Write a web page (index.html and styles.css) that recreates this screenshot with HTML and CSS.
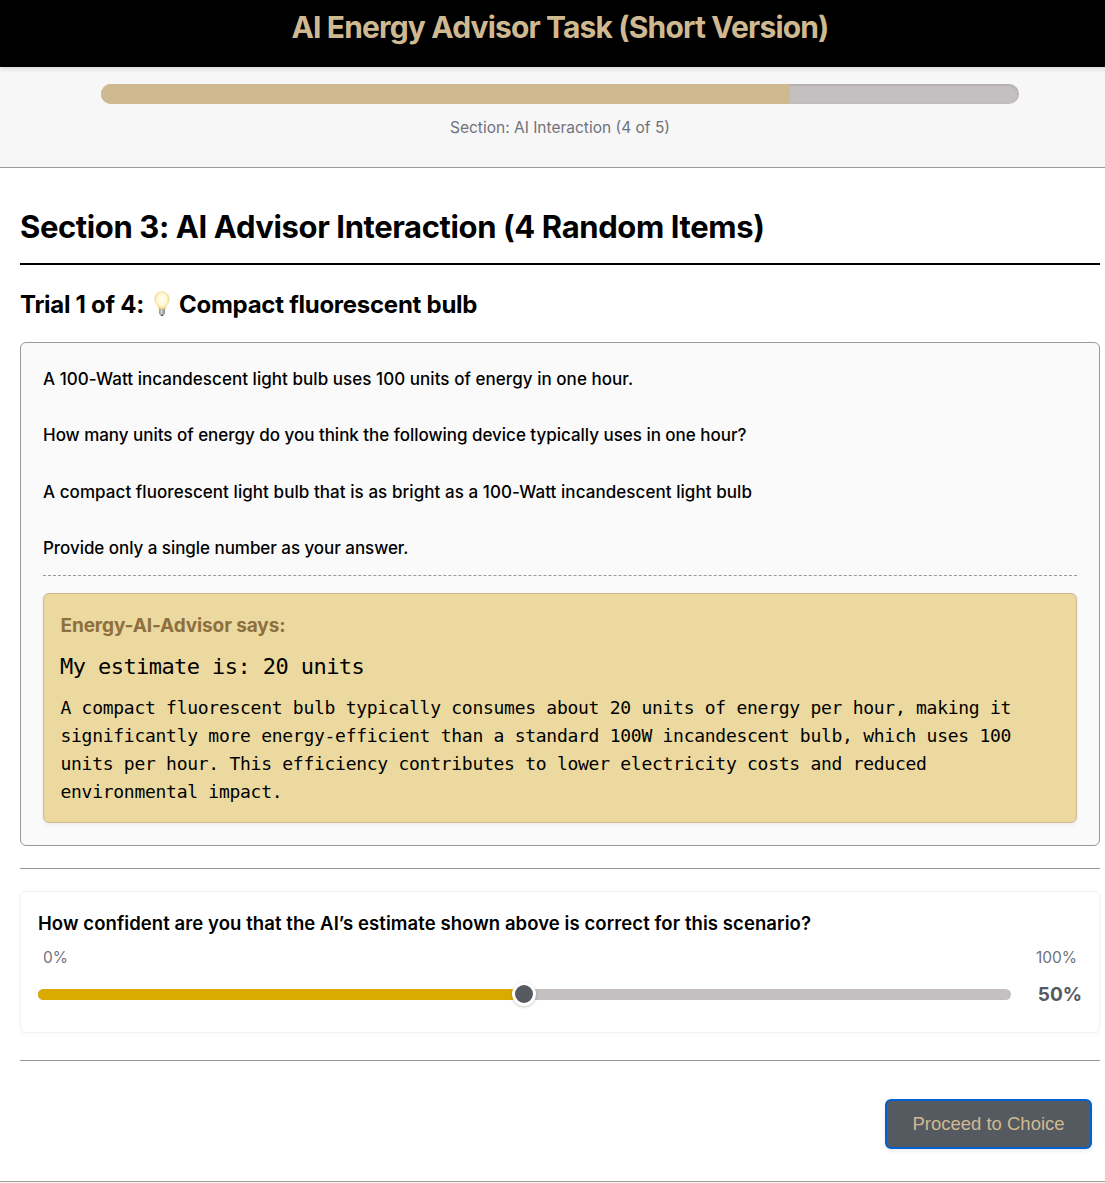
FILE: index.html
```html
<!DOCTYPE html>
<html lang="en">
<head>
<meta charset="utf-8">
<title>AI Energy Advisor Task</title>
<link rel="stylesheet" href="styles.css">
</head>
<body>
<div class="page">
  <header class="header"><h1 class="title">AI Energy Advisor Task (Short Version)</h1></header>
  <div class="progress">
    <div class="progress-track"><div class="progress-fill" style="width:75%"></div></div>
    <p class="progress-label">Section: AI Interaction (4 of 5)</p>
  </div>
  <main class="main">
    <h2 class="section-title">Section 3: AI Advisor Interaction (4 Random Items)</h2>
    <h3 class="trial-title"><span class="trial-count">Trial 1 of 4:</span>
      <svg class="bulb" viewBox="0 0 16 26" aria-hidden="true">
        <defs>
          <radialGradient id="glass" cx=".5" cy=".45" r=".58"><stop offset="0" stop-color="#fffef6"/><stop offset=".6" stop-color="#fff8d4"/><stop offset="1" stop-color="#f0cf62"/></radialGradient>
          <linearGradient id="base"><stop offset="0" stop-color="#8c8b86"/><stop offset=".45" stop-color="#deddd8"/><stop offset="1" stop-color="#7b7a77"/></linearGradient>
        </defs>
        <path d="M8 .8C3.900.8.8 3.900.8 7.900c0 3.100 1.500 4.700 2.600 6.500.8 1.400.9 2.700 1.500 3.600h6.200c.6-.9.7-2.200 1.500-3.600 1.100-1.800 2.600-3.400 2.600-6.500C15.200 3.900 12.100.8 8 .8z" fill="url(#glass)" stroke="#efd98f" stroke-width=".6"/>
        <path d="M5 17.700h6v4.800L9.700 24H6.300L5 22.500z" fill="url(#base)"/>
        <path d="M5 19.400h6M5 21.300h6" stroke="#aaa9a5" stroke-width=".5"/>
        <path d="M6.300 23.600h3.400L9 25H7z" fill="#555"/>
      </svg>
      <span>Compact fluorescent bulb</span></h3>
    <section class="scenario">
      <div class="prompt">
        <p class="baseline">A 100-Watt incandescent light bulb uses 100 units of energy in one hour.</p>
        <p class="ask">How many units of energy do you think the following device typically uses in one hour?</p>
        <p class="device">A compact fluorescent light bulb that is as bright as a 100-Watt incandescent light bulb</p>
        <p class="format">Provide only a single number as your answer.</p>
      </div>
      <div class="advice">
        <p class="advice-name">Energy-AI-Advisor says:</p>
        <p class="advice-estimate">My estimate is: 20 units</p>
        <p class="advice-text">A compact fluorescent bulb typically consumes about 20 units of energy per hour, making it significantly more energy-efficient than a standard 100W incandescent bulb, which uses 100 units per hour. This efficiency contributes to lower electricity costs and reduced environmental impact.</p>
      </div>
    </section>
    <hr class="rule">
    <section class="confidence">
      <p class="question">How confident are you that the AI’s estimate shown above is correct for this scenario?</p>
      <div class="scale"><span>0%</span><span>100%</span></div>
      <div class="slider-row">
        <div class="slider"><div class="slider-fill" style="width:50%"></div><div class="thumb"></div></div>
        <span class="value">50%</span>
      </div>
    </section>
    <hr class="rule">
    <div class="actions"><button class="proceed">Proceed to Choice</button></div>
  </main>
  <footer class="footer"></footer>
</div>
</body>
</html>
```

FILE: styles.css
```css
* { box-sizing: border-box; }
html { overflow: hidden; }
body { margin: 0; background: #fff; color: #000; font-family: Inter, "Liberation Sans", sans-serif; overflow: hidden; }
h1, h2, h3, p { margin: 0; white-space: nowrap; }
.page { width: 1120px; }
.header { position: relative; height: 67px; padding-top: 7px; background: #000; text-align: center; box-shadow: 0 2px 5px rgba(0,0,0,.12); }
.title { font-size: 30px; line-height: 40px; font-weight: 700; letter-spacing: -.85px; color: #cfb991; }
.progress { height: 101px; padding-top: 17px; background: #f7f7f7; border-bottom: 1px solid #9d9795; }
.progress-track { width: 918px; height: 20px; margin: 0 auto; border-radius: 10px; background: #c4bfc0; box-shadow: inset 0 1px 3px rgba(0,0,0,.14); overflow: hidden; }
.progress-fill { height: 100%; background: #cfb991; }
.progress-label { margin-top: 12px; font-size: 15.5px; line-height: 24px; color: #6f727b; text-align: center; }
.main { padding: 36px 20px 0; }
.section-title { height: 61px; font-size: 31px; line-height: 46px; font-weight: 700; letter-spacing: -.39px; border-bottom: 2px solid #000; }
.trial-title { display: flex; align-items: center; margin-top: 19px; height: 40px; font-size: 24px; font-weight: 700; letter-spacing: -.26px; }
.trial-count { width: 124px; letter-spacing: -.27px; }
.bulb { width: 16px; height: 26px; margin: 0 9px 0 10px; }
.scenario { margin-top: 18px; height: 504px; padding: 22px; border: 1px solid #9d9795; border-radius: 6px; background: #fafafa; }
.prompt { display: flex; flex-direction: column; gap: 28.4px; height: 211px; font-size: 17px; line-height: 28px; font-weight: 500; border-bottom: 1px dashed #9d9795; }
.baseline { letter-spacing: .045px; }
.ask { letter-spacing: -.025px; }
.device { letter-spacing: .062px; }
.format { letter-spacing: -.05px; }
.advice { margin-top: 17px; height: 230px; padding: 17px 16px 16px; border: 1px solid #cfb991; border-radius: 6px; background: #ebd99f; box-shadow: 0 2px 5px rgba(0,0,0,.06); }
.advice-name { padding-left: .5px; font-size: 19px; line-height: 30px; font-weight: 700; letter-spacing: -.11px; color: #8e6f3e; }
.advice-estimate { margin-top: 9px; font: 22px/34px "DejaVu Sans Mono", monospace; letter-spacing: -.57px; }
.advice-text { margin-top: 10px; padding-left: .5px; font: 18px/28px "DejaVu Sans Mono", monospace; letter-spacing: -.275px; white-space: normal; }
.rule { height: 1px; margin: 22px 0; border: 0; background: #9d9795; }
.confidence { height: 142px; padding: 16px 17px 0; border: 1px solid #f2f2f2; border-radius: 6px; box-shadow: 0 1px 4px rgba(0,0,0,.04); margin-bottom: 27px; }
.question { font-size: 18.5px; line-height: 30px; font-weight: 600; letter-spacing: .08px; }
.scale { display: flex; justify-content: space-between; padding: 0 5px; margin-top: 8px; font-size: 15.5px; line-height: 24px; color: #6f727b; }
.slider-row { display: flex; align-items: center; justify-content: space-between; margin-top: 9px; height: 30px; }
.slider { position: relative; width: 973px; height: 11px; border-radius: 6px; background: #c4bfc0; }
.slider-fill { height: 100%; border-radius: 6px 0 0 6px; background: #daaa00; }
.thumb { position: absolute; left: 474px; top: -7px; width: 24px; height: 24px; border: 3px solid #fff; border-radius: 50%; background: #555960; box-shadow: 0 1px 3px rgba(0,0,0,.22); }
.value { font-size: 19px; font-weight: 700; color: #555960; }
.actions { display: flex; justify-content: flex-end; padding: 16px 8px 0 0; }
.proceed { width: 207px; height: 50px; padding: 0; border: 2px solid #0061d5; border-radius: 6px; background: #555960; color: #cfb991; font: 18.5px "Liberation Sans", Arial, sans-serif; box-shadow: 0 2px 4px rgba(0,0,0,.08); }
.footer { margin-top: 32px; border-top: 1px solid #9d9795; }
```
